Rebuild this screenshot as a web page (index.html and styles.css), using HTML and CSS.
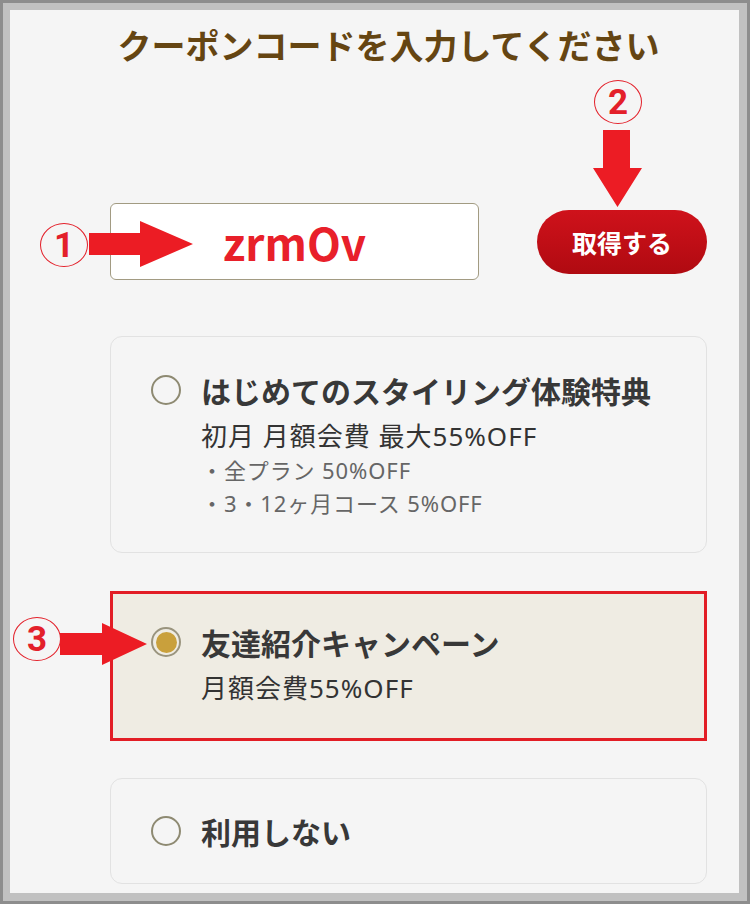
FILE: index.html
```html
<!DOCTYPE html>
<html lang="ja">
  <head>
    <meta charset="UTF-8" />
    <meta name="viewport" content="width=device-width, initial-scale=1.0" />
    <title>クーポンコード</title>
    <link rel="stylesheet" href="styles.css">
  </head>
  <body>
    <div class="frame">
      <div class="screen">
        <h1 class="title">クーポンコードを入力してください</h1>
        <div class="panel">
          <div class="code-row">
            <div class="code-input">zrmOv</div>
            <button class="get-btn">取得する</button>
          </div>
          <ul class="options">
            <li class="option">
              <div class="opt-head">
                <span class="radio"></span>
                <span class="opt-title">はじめてのスタイリング体験特典</span>
              </div>
              <div class="opt-body">
                <p class="opt-main">初月 月額会費 最大55%OFF</p>
                <p class="opt-note">・全プラン 50%OFF</p>
                <p class="opt-note">・3・12ヶ月コース 5%OFF</p>
              </div>
            </li>
            <li class="option selected">
              <div class="opt-head">
                <span class="radio checked"></span>
                <span class="opt-title">友達紹介キャンペーン</span>
              </div>
              <div class="opt-body">
                <p class="opt-main">月額会費55%OFF</p>
              </div>
            </li>
            <li class="option single">
              <div class="opt-head">
                <span class="radio"></span>
                <span class="opt-title">利用しない</span>
              </div>
            </li>
          </ul>
        </div>

        <!-- annotations -->
        <span class="mark mark-1">1</span>
        <svg class="arrow arrow-1" width="104" height="46" viewBox="0 0 104 46">
          <polygon points="0,12 51,12 51,0 104,23 51,46 51,34 0,34" />
        </svg>
        <span class="mark mark-2">2</span>
        <svg class="arrow arrow-2" width="49" height="77" viewBox="0 0 49 77">
          <polygon points="10,0 37,0 37,38 49,38 24.5,77 0,38 10,38" />
        </svg>
        <span class="mark mark-3">3</span>
        <svg class="arrow arrow-3" width="87" height="42" viewBox="0 0 87 42">
          <polygon points="0,10 42,10 42,0 87,21 42,42 42,32 0,32" />
        </svg>
      </div>
    </div>
  </body>
</html>
```

FILE: styles.css
```css
* {
  margin: 0;
  padding: 0;
  box-sizing: border-box;
}
body {
  font-family: "Noto Sans CJK JP", "Noto Sans", sans-serif;
  color: #333;
  background-color: #8d8d8d;
}
.frame {
  width: 750px;
  height: 904px;
  border: 3px solid #8d8d8d;
}
.screen {
  position: relative;
  height: 100%;
  border: 7px solid #c1c1c1;
  border-right-width: 8px;
  border-bottom-width: 8px;
  background-color: #f5f5f5;
  overflow: hidden;
}
.title {
  margin-top: 13px;
  padding-left: 28px;
  text-align: center;
  font-size: 34px;
  line-height: 44px;
  font-weight: 700;
  color: #654512;
}
.panel {
  width: 597px;
  margin-left: 100px;
}
.code-row {
  display: flex;
  align-items: center;
  justify-content: space-between;
  margin-top: 136px;
}
.code-input {
  width: 369px;
  height: 77px;
  display: flex;
  align-items: center;
  justify-content: center;
  background-color: #fff;
  border: 1.5px solid #a29b82;
  border-radius: 6px;
  font-size: 44px;
  font-weight: 700;
  color: #e8202a;
}
.get-btn {
  width: 170px;
  height: 64px;
  border: none;
  border-radius: 32px;
  background: linear-gradient(#cf121b, #b00a11);
  color: #fff;
  font-family: inherit;
  font-size: 25px;
  font-weight: 700;
}
.options {
  list-style: none;
  margin-top: 56px;
}
.option {
  border: 1px solid #e2e2e2;
  border-radius: 12px;
  padding: 33px 40px 32px;
  margin-bottom: 38px;
}
.option.selected {
  border: 3px solid #e21d25;
  border-radius: 0;
  background-color: #efece3;
  padding: 28px 38px 32px;
  margin-bottom: 37px;
}
.option.single {
  padding-top: 32px;
  padding-bottom: 32px;
}
.opt-head {
  display: flex;
  align-items: center;
  gap: 20px;
}
.radio {
  width: 30px;
  height: 30px;
  border: 2px solid #8e8a72;
  border-radius: 50%;
  display: flex;
  align-items: center;
  justify-content: center;
  flex-shrink: 0;
}
.radio.checked {
  border-color: #9a947e;
}
.radio.checked::after {
  content: "";
  width: 21px;
  height: 21px;
  border-radius: 50%;
  background-color: #c9a03c;
}
.opt-title {
  font-size: 30px;
  line-height: 40px;
  font-weight: 700;
  color: #383838;
}
.opt-body {
  margin-top: 8px;
  padding-left: 50px;
}
.opt-main {
  font-family: "Noto Sans", "Noto Sans CJK JP", sans-serif;
  font-size: 26px;
  line-height: 36px;
  letter-spacing: 1px;
  color: #333;
}
.opt-note {
  font-family: "Noto Sans", "Noto Sans CJK JP", sans-serif;
  font-size: 22px;
  line-height: 33px;
  letter-spacing: 0.9px;
  color: #666;
}

/* red annotations drawn over the screenshot */
.mark {
  position: absolute;
  width: 48px;
  height: 44px;
  border: 1.5px solid #e3202a;
  border-radius: 50%;
  display: flex;
  align-items: center;
  justify-content: center;
  font-family: Roboto, "Liberation Sans", sans-serif;
  font-size: 35px;
  line-height: 1;
  font-weight: 700;
  color: #e3202a;
}
.mark-1 {
  left: 30px;
  top: 213px;
}
.mark-2 {
  left: 584px;
  top: 70px;
}
.mark-3 {
  left: 3px;
  top: 607px;
}
.arrow {
  position: absolute;
  fill: #ec1c24;
}
.arrow-1 {
  left: 79px;
  top: 211px;
}
.arrow-2 {
  left: 583px;
  top: 120px;
}
.arrow-3 {
  left: 50px;
  top: 613px;
}
```
